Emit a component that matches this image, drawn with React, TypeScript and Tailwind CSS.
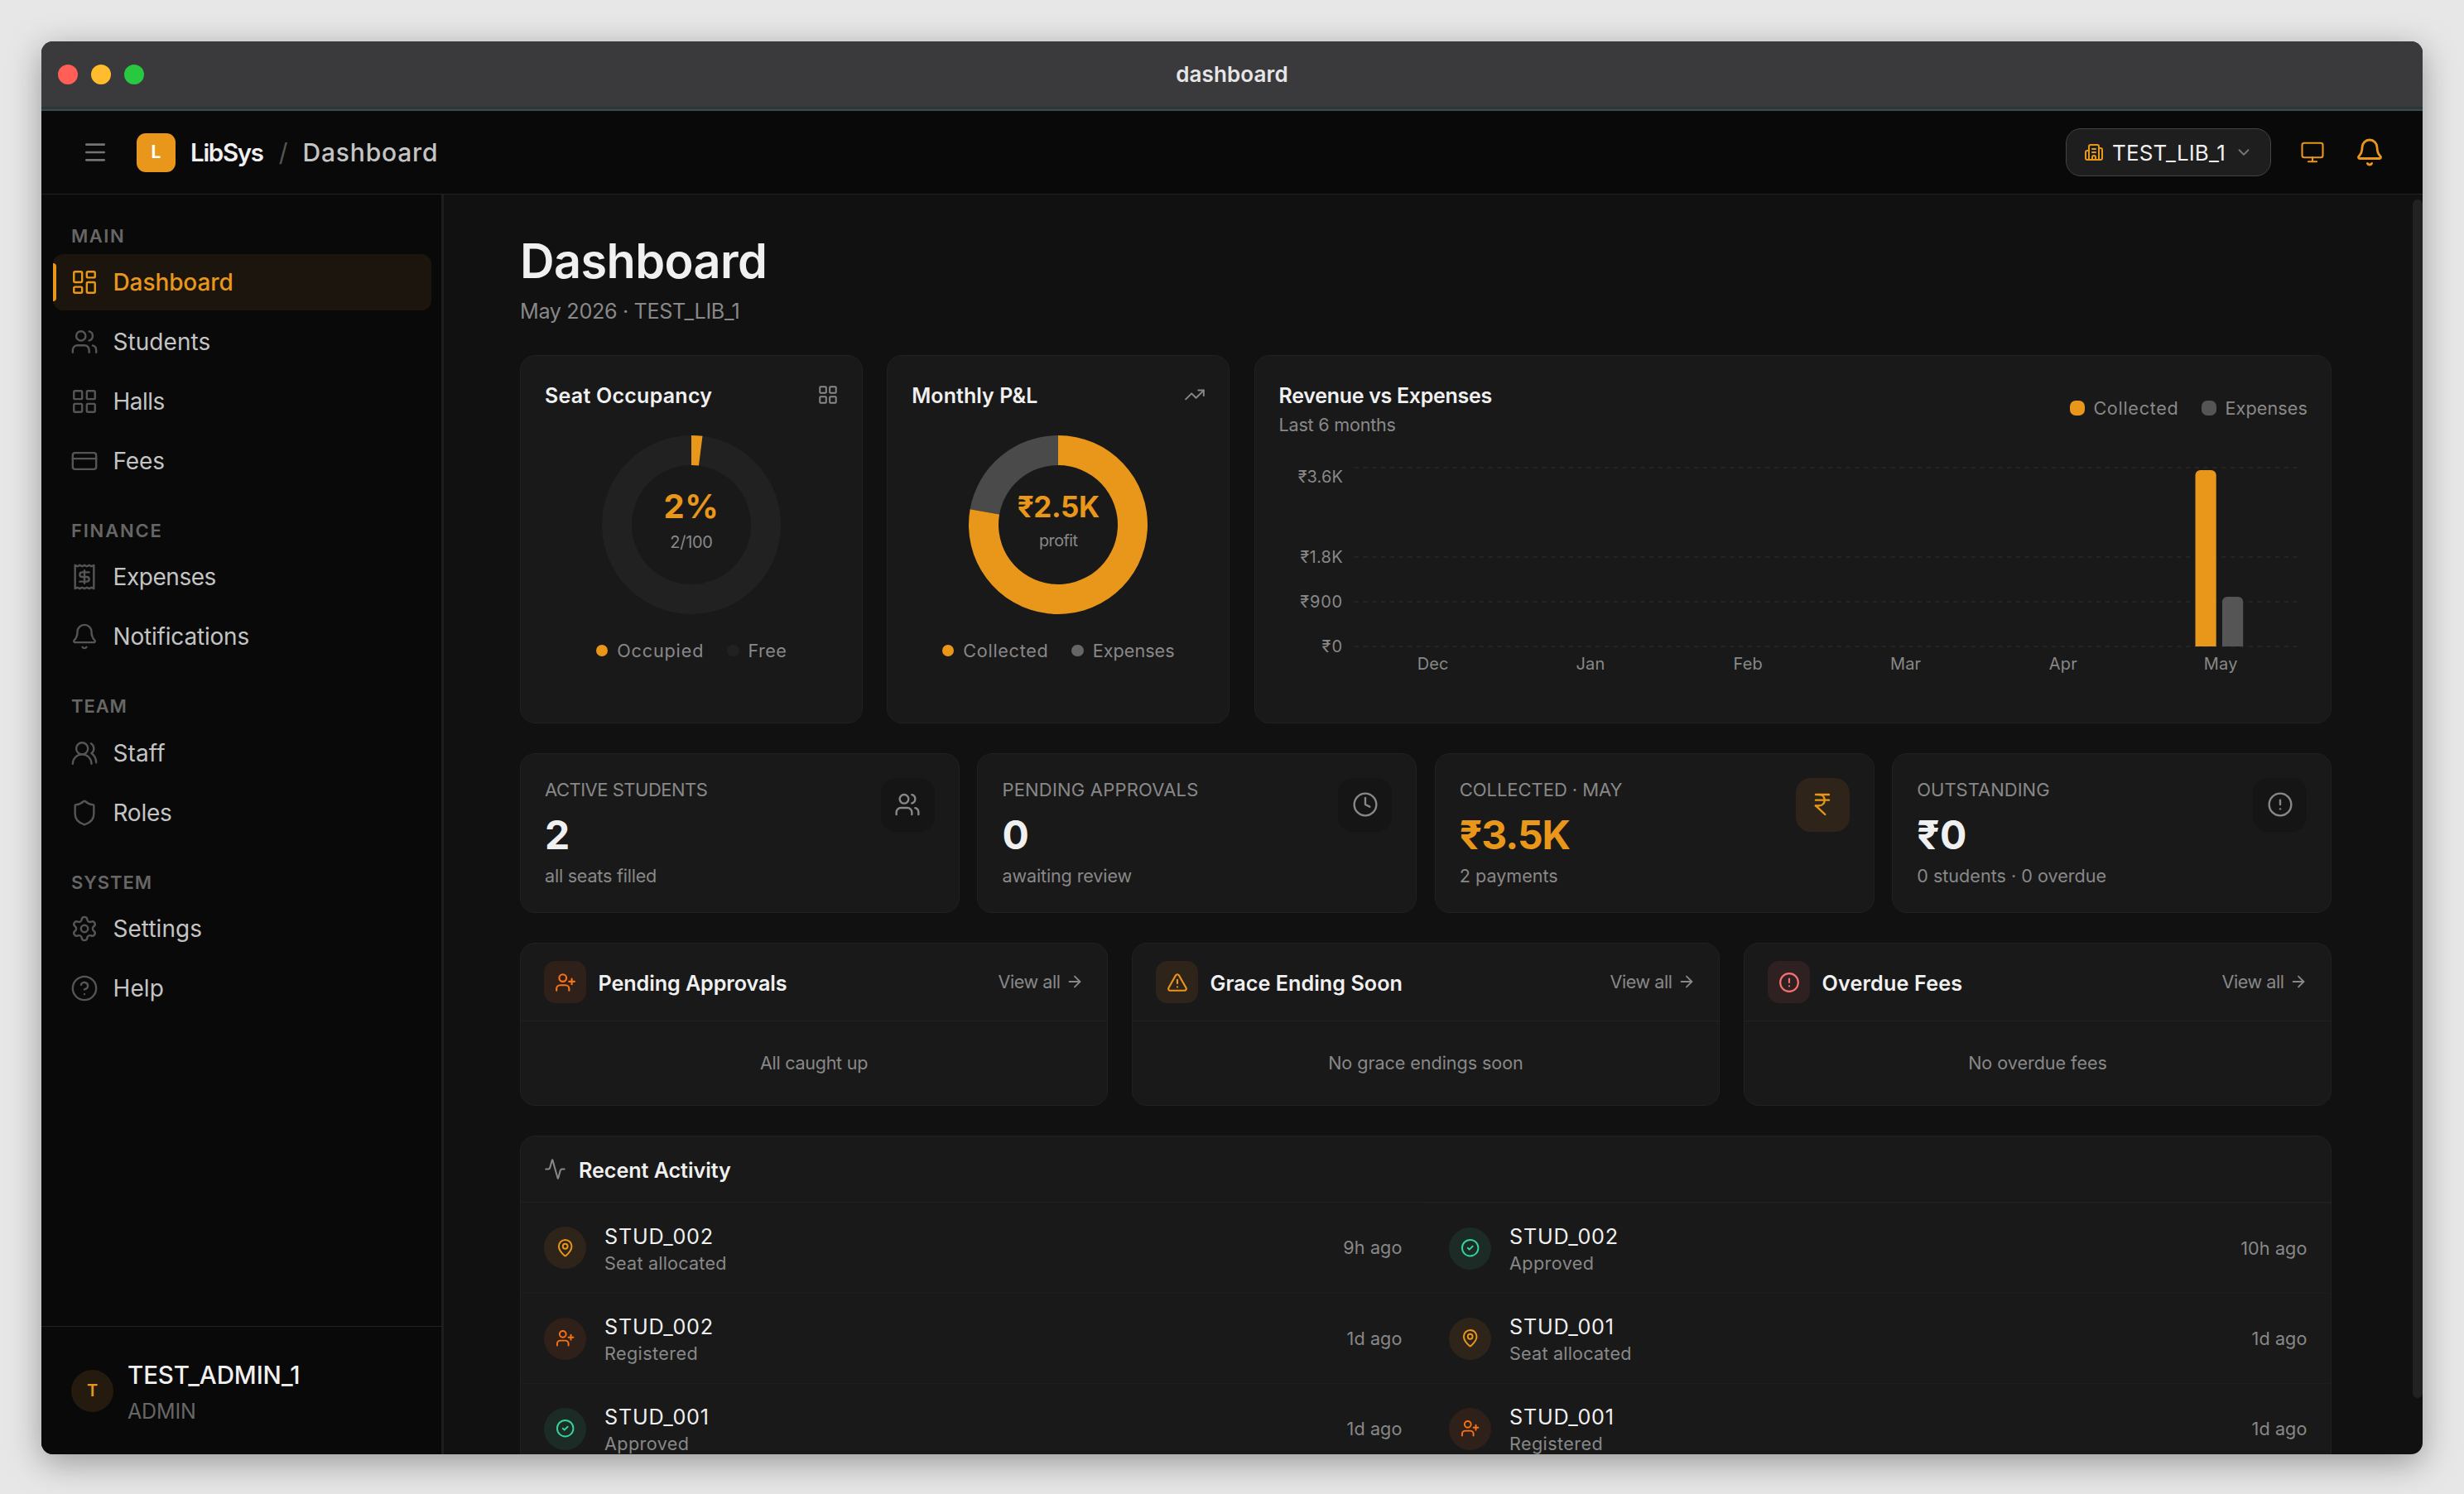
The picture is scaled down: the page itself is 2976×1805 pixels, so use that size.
import React from "react";
import {
  Activity,
  ArrowRight,
  Bell,
  Building2,
  ChevronDown,
  CircleAlert,
  CircleCheck,
  CircleHelp,
  Clock,
  CreditCard,
  IndianRupee,
  LayoutDashboard,
  LayoutGrid,
  MapPin,
  Menu,
  Monitor,
  Receipt,
  Settings,
  Shield,
  TrendingUp,
  TriangleAlert,
  UserPlus,
  Users,
  UsersRound,
} from "lucide-react";

type Icon = React.ComponentType<{ size?: number; strokeWidth?: number; className?: string }>;

const CARD = "rounded-[18px] border border-[#212121] bg-[#191919]";

/* ---------- Window title bar ---------- */

function TitleBar() {
  return (
    <div className="shrink-0">
      <div className="relative flex h-[79px] items-center bg-[#3a3a3c] pl-5">
        <div className="flex gap-4">
          <span className="size-6 rounded-full bg-[#ff5f57]" />
          <span className="size-6 rounded-full bg-[#ffbd2e]" />
          <span className="size-6 rounded-full bg-[#28c840]" />
        </div>
        <div className="absolute inset-0 flex items-center justify-center pb-px text-[26px] font-semibold tracking-[0.1px] text-[#e6e6e6]">
          dashboard
        </div>
      </div>
      <div className="h-px bg-[#323334]" />
      <div className="h-[2px] bg-[#27393f]" />
      <div className="h-[2px] bg-[#3f484c]" />
    </div>
  );
}

/* ---------- App header ---------- */

function Header() {
  return (
    <header className="flex h-[101px] shrink-0 items-center border-b border-[#222222] bg-[#090909] pr-[46px] pl-[49px]">
      <Menu size={32} strokeWidth={2} className="text-[#737373]" />
      <div className="ml-[34px] flex size-[47px] items-center justify-center rounded-[11px] bg-[#e8971a] text-[21px] font-bold text-white">
        L
      </div>
      <span className="ml-[18px] text-[29.5px] font-semibold tracking-[-1.3px] text-[#f0f0f0]">LibSys</span>
      <span className="ml-[19px] text-[30px] text-[#555555]">/</span>
      <span className="ml-[18px] text-[30px] font-medium tracking-[0.8px] text-[#c4c4c4]">Dashboard</span>

      <div className="ml-auto flex h-[58px] w-[248px] items-center rounded-[18px] border border-[#444444] bg-[#1e1e1e] pl-[21px]">
        <Building2 size={24} strokeWidth={2} className="shrink-0 text-[#e8971a]" />
        <span className="ml-[10px] text-[26px] tracking-[0.15px] whitespace-nowrap text-[#f0f0f0]">TEST_LIB_1</span>
        <ChevronDown size={22} strokeWidth={2} className="ml-auto mr-[21px] shrink-0 text-[#777777]" />
      </div>
      <Monitor size={30} strokeWidth={1.7} className="ml-[35px] text-[#e8971a]" />
      <Bell size={36} strokeWidth={1.9} className="ml-[36px] text-[#e8971a]" />
    </header>
  );
}

/* ---------- Sidebar ---------- */

const NAV: { label: string; labelClass: string; items: { icon: Icon; text: string; cls: string; active?: boolean }[] }[] = [
  {
    label: "MAIN",
    labelClass: "mb-2 tracking-[1.5px]",
    items: [
      { icon: LayoutDashboard, text: "Dashboard", cls: "font-medium tracking-[-0.1px]", active: true },
      { icon: Users, text: "Students", cls: "tracking-[0.06px]" },
      { icon: LayoutGrid, text: "Halls", cls: "tracking-[-0.5px]" },
      { icon: CreditCard, text: "Fees", cls: "tracking-[-0.1px]" },
    ],
  },
  {
    label: "FINANCE",
    labelClass: "mb-2 tracking-[1.8px]",
    items: [
      { icon: Receipt, text: "Expenses", cls: "tracking-[-0.45px]" },
      { icon: Bell, text: "Notifications", cls: "tracking-[-0.19px]" },
    ],
  },
  {
    label: "TEAM",
    labelClass: "mb-[9px] tracking-[0.9px]",
    items: [
      { icon: UsersRound, text: "Staff", cls: "tracking-[0.11px]" },
      { icon: Shield, text: "Roles", cls: "tracking-[-0.25px]" },
    ],
  },
  {
    label: "SYSTEM",
    labelClass: "mb-2 tracking-[0.9px]",
    items: [
      { icon: Settings, text: "Settings", cls: "tracking-[0.04px]" },
      { icon: CircleHelp, text: "Help", cls: "tracking-[0.1px]" },
    ],
  },
];

function Sidebar() {
  return (
    <aside className="flex w-[486px] shrink-0 flex-col border-r-[3px] border-[#1e1e1e] bg-[#090909]">
      <nav className="flex-1">
        {NAV.map((group) => (
          <div key={group.label} className="pt-9">
            <div className={`h-7 pl-[36px] text-[22px] leading-[28px] font-semibold text-[#666666] ${group.labelClass}`}>
              {group.label}
            </div>
            <div className="flex flex-col gap-1">
              {group.items.map(({ icon: I, text, cls, active }) => (
                <div
                  key={text}
                  className={`relative mr-3 ml-[14px] flex h-[68px] items-center rounded-xl pl-[21px] ${
                    active ? "bg-[#1c150e] text-[#e8971a]" : "text-[#c4c4c4]"
                  }`}
                >
                  {active && <span className="absolute top-[11px] left-0 h-[46px] w-1 rounded-r bg-[#e8971a]" />}
                  <I size={34} strokeWidth={1.7} className={active ? "text-[#e8971a]" : "text-[#555555]"} />
                  <span className={`ml-[17.5px] text-[28px] leading-[40px] ${cls}`}>{text}</span>
                </div>
              ))}
            </div>
          </div>
        ))}
      </nav>
      <div className="flex h-[155px] items-center border-t border-[#222222] pl-[36px]">
        <div className="flex size-[51px] items-center justify-center rounded-full bg-[#241b0e] text-[20px] font-semibold text-[#e8971a]">
          T
        </div>
        <div className="ml-[17px] pt-px">
          <div className="text-[29.5px] leading-[40px] font-medium tracking-[-0.1px] text-[#f0f0f0]">TEST_ADMIN_1</div>
          <div className="mt-2 text-[25px] leading-[32px] tracking-[-0.15px] text-[#666666]">ADMIN</div>
        </div>
      </div>
    </aside>
  );
}

/* ---------- Donut cards ---------- */

function arc(from: number, to: number) {
  const p = (r: number, deg: number) => {
    const a = ((deg - 90) * Math.PI) / 180;
    return `${(108 + r * Math.cos(a)).toFixed(2)} ${(108 + r * Math.sin(a)).toFixed(2)}`;
  };
  const large = to - from > 180 ? 1 : 0;
  return `M${p(108, from)}A108 108 0 ${large} 1 ${p(108, to)}L${p(72, to)}A72 72 0 ${large} 0 ${p(72, from)}Z`;
}

function DonutCard(props: {
  title: string;
  titleClass: string;
  icon: Icon;
  split: number;
  rest: string;
  value: string;
  valueClass: string;
  caption: string;
  captionClass: string;
  legend: { text: string; dot: string; cls: string }[];
}) {
  const I = props.icon;
  return (
    <section className={`${CARD} flex w-[414px] shrink-0 flex-col p-[28px]`}>
      <div className="flex h-[39px] items-center justify-between">
        <h2 className={`pl-px text-[25px] leading-[38px] font-semibold text-[#f0f0f0] ${props.titleClass}`}>{props.title}</h2>
        <I size={26} strokeWidth={1.8} className="mb-[2px] text-[#888888]" />
      </div>
      <div className="relative mx-auto mt-[29px] size-[216px]">
        <svg viewBox="0 0 216 216" className="size-full">
          <path d={arc(props.split, 360)} className={props.rest} />
          <path d={arc(0, props.split)} className="fill-[#e8971a]" />
        </svg>
        <div className="absolute inset-0 flex flex-col items-center pt-[62px] whitespace-nowrap">
          <span className={`leading-[48px] font-bold text-[#e8971a] ${props.valueClass}`}>{props.value}</span>
          <span className={`leading-[28px] text-[#888888] ${props.captionClass}`}>{props.caption}</span>
        </div>
      </div>
      <div className="mt-[29px] flex h-[30px] items-center justify-center gap-[28px]">
        {props.legend.map((l) => (
          <span key={l.text} className="flex items-center gap-[11px] text-[#888888]">
            <span className={`size-[14.4px] rounded-full ${l.dot}`} />
            <span className={`text-[21.6px] leading-[30px] ${l.cls}`}>{l.text}</span>
          </span>
        ))}
      </div>
    </section>
  );
}

/* ---------- Revenue chart ---------- */

const Y_TICKS = [
  { label: "₹3.6K", line: 25, text: 43, cls: "tracking-[0.1px]" },
  { label: "₹1.8K", line: 133, text: 140, cls: "tracking-[0.3px]" },
  { label: "₹900", line: 187, text: 194, cls: "tracking-[0.8px]" },
  { label: "₹0", line: 241, text: 248, cls: "tracking-[1px]" },
];
const MONTHS = ["Dec", "Jan", "Feb", "Mar", "Apr", "May"];

function RevenueCard() {
  return (
    <section className={`${CARD} flex-1 px-[28px] pt-[30px]`}>
      <div className="flex items-center justify-between">
        <div className="pl-px">
          <h2 className="text-[25px] leading-[36px] font-semibold tracking-[-0.29px] text-[#f0f0f0]">Revenue vs Expenses</h2>
          <p className="text-[21.6px] leading-[35px] tracking-[-0.23px] text-[#888888]">Last 6 months</p>
        </div>
        <div className="mb-[5px] flex items-center gap-[28px] text-[21.6px] leading-[30px] text-[#888888]">
          <span className="flex items-center gap-[10px]">
            <span className="size-[18px] rounded-[7px] bg-[#e8971a]" />
            <span className="tracking-[0.7px]">Collected</span>
          </span>
          <span className="flex items-center gap-[10px]">
            <span className="size-[18px] rounded-[7px] bg-[#555555]" />
            <span className="tracking-[0.1px]">Expenses</span>
          </span>
        </div>
      </div>
      <svg viewBox="0 0 1243 290" className="mt-[9px] h-[290px] w-[1243px]">
        {Y_TICKS.map((t) => (
          <g key={t.label}>
            <line x1={91.5} x2={1232} y1={t.line} y2={t.line} strokeWidth={1.8} strokeDasharray="5.4 5.4" className="stroke-[#242424]" />
            <text x={78} y={t.text} textAnchor="end" className={`fill-[#888888] text-[20px] ${t.cls}`}>
              {t.label}
            </text>
          </g>
        ))}
        <path d="M1107.5 241V34a6 6 0 0 1 6-6h13.2a6 6 0 0 1 6 6v207z" className="fill-[#e8971a]" />
        <path d="M1140 241v-54a6 6 0 0 1 6-6h13.2a6 6 0 0 1 6 6v54z" className="fill-[#555555]" />
        {MONTHS.map((m, i) => (
          <text key={m} x={186.7 + i * 190.3} y={269} textAnchor="middle" className="fill-[#888888] text-[20px] tracking-[0.2px]">
            {m}
          </text>
        ))}
      </svg>
    </section>
  );
}

/* ---------- Stat tiles ---------- */

const STATS = [
  { label: "ACTIVE STUDENTS", lc: "tracking-[-0.5px]", value: "2", vc: "", sub: "all seats filled", sc: "tracking-[-0.24px]", icon: Users },
  { label: "PENDING APPROVALS", lc: "tracking-[0.2px]", value: "0", vc: "", sub: "awaiting review", sc: "tracking-[-0.14px]", icon: Clock },
  { label: "COLLECTED · MAY", lc: "tracking-[-0.05px]", value: "₹3.5K", vc: "tracking-[-1px]", sub: "2 payments", sc: "tracking-[-0.03px]", icon: IndianRupee, accent: true },
  { label: "OUTSTANDING", lc: "tracking-[0px]", value: "₹0", vc: "tracking-[0.5px]", sub: "0 students · 0 overdue", sc: "", icon: CircleAlert },
];

function StatTiles() {
  return (
    <div className="mt-[36px] grid grid-cols-4 gap-[21.6px]">
      {STATS.map((s) => (
        <section key={s.label} className={`${CARD} flex h-[193px] justify-between pt-[28px] pr-[29px] pl-[29px]`}>
          <div>
            <div className={`text-[22px] leading-[30px] text-[#888888] ${s.lc}`}>{s.label}</div>
            <div className={`mt-[11px] text-[48px] leading-[58px] font-bold ${s.accent ? "text-[#e8971a]" : "text-[#f0f0f0]"} ${s.vc}`}>
              {s.value}
            </div>
            <div className={`mt-[5px] text-[21.6px] leading-[30px] text-[#888888] ${s.sc}`}>{s.sub}</div>
          </div>
          <div
            className={`mt-px flex size-[65px] items-center justify-center rounded-[18px] pb-px ${
              s.accent ? "bg-[#2e241a] text-[#e8971a]" : "bg-[#151515] text-[#888888]"
            }`}
          >
            <s.icon size={32} strokeWidth={1.8} />
          </div>
        </section>
      ))}
    </div>
  );
}

/* ---------- Queue cards ---------- */

const QUEUES = [
  { title: "Pending Approvals", tc: "tracking-[-0.1px]", icon: UserPlus, box: "bg-[#2f2019] text-[#f97316]", empty: "All caught up", ec: "tracking-[-0.3px]" },
  { title: "Grace Ending Soon", tc: "tracking-[0.03px]", icon: TriangleAlert, box: "bg-[#2e241a] text-[#e8971a]", empty: "No grace endings soon", ec: "tracking-[-0.07px]" },
  { title: "Overdue Fees", tc: "tracking-[0.15px]", icon: CircleAlert, box: "bg-[#2f2121] text-[#f87171]", empty: "No overdue fees", ec: "tracking-[-0.05px]" },
];

function QueueCards() {
  return (
    <div className="mt-[36px] grid grid-cols-3 gap-[29px]">
      {QUEUES.map((q) => (
        <section key={q.title} className={`${CARD} h-[197px]`}>
          <div className="flex h-[94px] items-center border-b border-[#212121] px-[28px]">
            <div className={`flex size-[51px] items-center justify-center rounded-[14px] ${q.box}`}>
              <q.icon size={26} strokeWidth={2} />
            </div>
            <h2 className={`ml-[14.5px] pt-[2px] text-[25.2px] leading-[36px] font-semibold text-[#f0f0f0] ${q.tc}`}>{q.title}</h2>
            <span className="ml-auto flex items-center gap-[6.5px] pb-px text-[21.6px] leading-[30px] tracking-[-0.46px] text-[#888888]">
              View all
              <ArrowRight size={22} strokeWidth={2} />
            </span>
          </div>
          <div className={`flex h-[100px] items-center justify-center text-[21.6px] text-[#888888] ${q.ec}`}>{q.empty}</div>
        </section>
      ))}
    </div>
  );
}

/* ---------- Recent activity ---------- */

const KINDS = {
  seat: { icon: MapPin, box: "bg-[#2e241a] text-[#e8971a]", text: "Seat allocated", cls: "tracking-[0.2px]" },
  registered: { icon: UserPlus, box: "bg-[#2f2019] text-[#f97316]", text: "Registered", cls: "tracking-[0.4px]" },
  approved: { icon: CircleCheck, box: "bg-[#1c2b25] text-[#34d399]", text: "Approved", cls: "tracking-[0.4px]" },
};

const ACTIVITY: { kind: keyof typeof KINDS; name: string; time: string }[][] = [
  [
    { kind: "seat", name: "STUD_002", time: "9h ago" },
    { kind: "registered", name: "STUD_002", time: "1d ago" },
    { kind: "approved", name: "STUD_001", time: "1d ago" },
  ],
  [
    { kind: "approved", name: "STUD_002", time: "10h ago" },
    { kind: "seat", name: "STUD_001", time: "1d ago" },
    { kind: "registered", name: "STUD_001", time: "1d ago" },
  ],
];

function RecentActivity() {
  return (
    <section className={`${CARD} mt-[36px]`}>
      <div className="flex h-[80px] items-center border-b border-[#212121] px-[28px]">
        <Activity size={27} strokeWidth={1.8} className="text-[#888888]" />
        <h2 className="ml-[15px] pt-[2px] text-[25.2px] leading-[36px] font-semibold tracking-[-0.08px] text-[#f0f0f0]">Recent Activity</h2>
      </div>
      <div className="grid grid-cols-2">
        {ACTIVITY.map((column, c) => (
          <div key={c}>
            {column.map((a, i) => {
              const k = KINDS[a.kind];
              return (
                <div
                  key={i}
                  className={`flex items-center border-b border-[#1d1d1d] pr-[28.5px] pl-[28px] ${i === 0 ? "h-[110px]" : "h-[109px]"} ${
                    c === 1 && i === 0 ? "border-t" : ""
                  }`}
                >
                  <div className={`flex size-[51px] items-center justify-center rounded-full ${k.box}`}>
                    <k.icon size={23.4} strokeWidth={2} />
                  </div>
                  <div className="ml-[22px] pt-[2px]">
                    <div className="text-[25.2px] leading-[34px] tracking-[0.75px] text-[#f0f0f0]">{a.name}</div>
                    <div className={`text-[21.6px] leading-[30px] text-[#888888] ${k.cls}`}>{k.text}</div>
                  </div>
                  <span className="ml-auto text-[21.6px] tracking-[0.1px] text-[#888888]">{a.time}</span>
                </div>
              );
            })}
          </div>
        ))}
      </div>
    </section>
  );
}

/* ---------- Page ---------- */

export default function App() {
  return (
    <div className="h-[1805px] w-[2976px] overflow-hidden bg-[#e7e7e7] p-[50px] font-['Inter','Liberation_Sans',sans-serif]">
      <div className="flex h-[1707px] w-[2876px] flex-col overflow-hidden rounded-[14px] bg-[#111111] shadow-[0_10px_40px_rgba(0,0,0,0.34)]">
        <TitleBar />
        <Header />
        <div className="flex min-h-0 flex-1">
          <Sidebar />
          <main className="min-w-0 flex-1 overflow-hidden pt-[44px] pl-[92px]">
            <div className="w-[2188px]">
              <h1 className="text-[57.6px] leading-[72px] font-semibold tracking-[-0.6px] text-[#f0f0f0]">Dashboard</h1>
              <p className="mt-[7px] text-[25.2px] leading-[36px] tracking-[-0.35px] text-[#888888]">May 2026 · TEST_LIB_1</p>
              <div className="mt-[35px] flex h-[445px] gap-[29.25px]">
                <DonutCard
                  title="Seat Occupancy"
                  titleClass="tracking-[0.25px]"
                  icon={LayoutGrid}
                  split={7.2}
                  rest="fill-[#212121]"
                  value="2%"
                  valueClass="text-[40px] tracking-[0.6px]"
                  caption="2/100"
                  captionClass="mt-[5px] text-[20px] tracking-[-0.29px]"
                  legend={[
                    { text: "Occupied", dot: "bg-[#e8971a]", cls: "tracking-[0.85px]" },
                    { text: "Free", dot: "bg-[#212121]", cls: "tracking-[0.38px]" },
                  ]}
                />
                <DonutCard
                  title="Monthly P&L"
                  titleClass="tracking-[0.06px]"
                  icon={TrendingUp}
                  split={280}
                  rest="fill-[#4a4a4a]"
                  value="₹2.5K"
                  valueClass="text-[35px] tracking-[-0.4px]"
                  caption="profit"
                  captionClass="mt-[3px] text-[19.8px] tracking-[-0.5px]"
                  legend={[
                    { text: "Collected", dot: "bg-[#e8971a]", cls: "tracking-[0.7px]" },
                    { text: "Expenses", dot: "bg-[#666666]", cls: "tracking-[0px]" },
                  ]}
                />
                <RevenueCard />
              </div>
              <StatTiles />
              <QueueCards />
              <RecentActivity />
            </div>
          </main>
          <div className="w-3 shrink-0 pt-[6px]">
            <div className="h-[1448px] rounded-full bg-[#222222]" />
          </div>
        </div>
      </div>
    </div>
  );
}
